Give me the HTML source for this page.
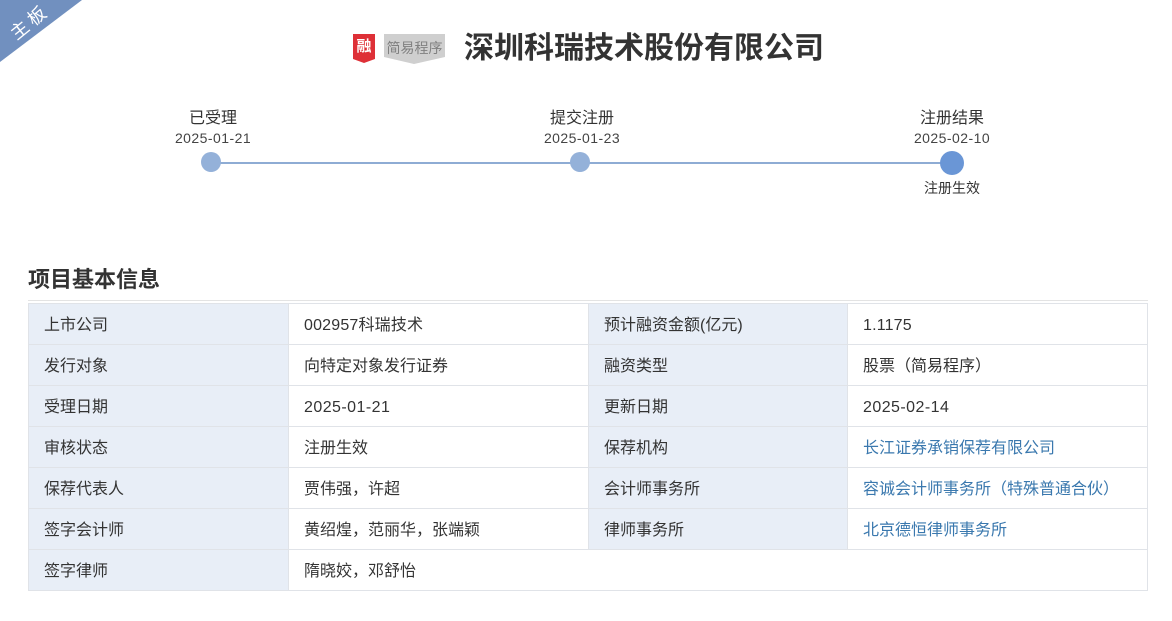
<!DOCTYPE html>
<html lang="zh">
<head>
<meta charset="utf-8">
<style>
html,body{margin:0;padding:0;background:#fff}
body{width:1172px;height:621px;position:relative;overflow:hidden;font-family:"Liberation Sans","Noto Sans CJK SC",sans-serif;color:#333}
.a{position:absolute;white-space:nowrap}
.c{transform:translateX(-50%);text-align:center}
.d{font-size:14px;letter-spacing:.45px;color:#444;line-height:20px}
.s{font-size:16px;line-height:20px;color:#333}
.dot{position:absolute;width:20px;height:20px;border-radius:50%;background:#94b1d9}
.cell{position:absolute;box-sizing:border-box;height:42px;border:1px solid #e0e3e8;font-size:16px;line-height:44px;padding-left:15px;white-space:nowrap;color:#333}
.k{background:#e8eef7}
.l{color:#3a78ae}
.n{letter-spacing:.45px}
.m{letter-spacing:.18px}
</style>
</head>
<body>
<svg class="a" style="left:0;top:0" width="84" height="64"><polygon points="0,0 82,0 0,62" fill="#7190bf"/></svg>
<div class="a" style="left:5px;top:12px;color:#fff;font-size:18px;line-height:20px;width:50px;text-align:center;transform:rotate(-39deg);letter-spacing:4px">主板</div>

<svg class="a" style="left:353px;top:34px" width="22" height="30"><polygon points="0,0 22,0 22,25 11,29 0,25" fill="#de3037"/></svg>
<div class="a" style="left:353px;top:37px;width:22px;text-align:center;color:#fff;font-size:15px;font-weight:700;line-height:20px">融</div>
<svg class="a" style="left:384px;top:34px" width="61" height="30"><polygon points="0,0 61,0 61,23 30,30 0,23" fill="#cfcfcf"/></svg>
<div class="a" style="left:384px;top:38px;width:61px;text-align:center;color:#808080;font-size:14px;line-height:20px;letter-spacing:0">简易程序</div>
<div class="a" style="left:464px;top:28px;font-size:30px;font-weight:700;line-height:42px;color:#333;letter-spacing:0">深圳科瑞技术股份有限公司</div>

<div class="a c s" style="left:213px;top:109px">已受理</div>
<div class="a c d" style="left:213px;top:128px">2025-01-21</div>
<div class="a c s" style="left:582px;top:109px">提交注册</div>
<div class="a c d" style="left:582px;top:128px">2025-01-23</div>
<div class="a c s" style="left:952px;top:109px">注册结果</div>
<div class="a c d" style="left:952px;top:128px">2025-02-10</div>
<div class="a" style="left:211px;top:162px;width:741px;height:2px;background:#8eacd4"></div>
<div class="dot" style="left:201px;top:152px"></div>
<div class="dot" style="left:570px;top:152px"></div>
<div class="dot" style="left:940px;top:151px;width:24px;height:24px;background:#6a96d6"></div>
<div class="a c" style="left:952px;top:178px;font-size:14px;line-height:20px;color:#333">注册生效</div>

<div class="a" style="left:28px;top:265px;font-size:22px;font-weight:700;line-height:30px;color:#333">项目基本信息</div>
<div class="a" style="left:28px;top:300px;width:1120px;height:1px;background:#e3e3e3"></div>

<div class="cell k" style="left:28px;top:303px;width:261px">上市公司</div>
<div class="cell m" style="left:288px;top:303px;width:301px">002957科瑞技术</div>
<div class="cell k" style="left:588px;top:303px;width:260px">预计融资金额(亿元)</div>
<div class="cell m" style="left:847px;top:303px;width:301px">1.1175</div>

<div class="cell k" style="left:28px;top:344px;width:261px">发行对象</div>
<div class="cell" style="left:288px;top:344px;width:301px">向特定对象发行证券</div>
<div class="cell k" style="left:588px;top:344px;width:260px">融资类型</div>
<div class="cell" style="left:847px;top:344px;width:301px">股票（简易程序）</div>

<div class="cell k" style="left:28px;top:385px;width:261px">受理日期</div>
<div class="cell n" style="left:288px;top:385px;width:301px">2025-01-21</div>
<div class="cell k" style="left:588px;top:385px;width:260px">更新日期</div>
<div class="cell n" style="left:847px;top:385px;width:301px">2025-02-14</div>

<div class="cell k" style="left:28px;top:426px;width:261px">审核状态</div>
<div class="cell" style="left:288px;top:426px;width:301px">注册生效</div>
<div class="cell k" style="left:588px;top:426px;width:260px">保荐机构</div>
<div class="cell l" style="left:847px;top:426px;width:301px">长江证券承销保荐有限公司</div>

<div class="cell k" style="left:28px;top:467px;width:261px">保荐代表人</div>
<div class="cell" style="left:288px;top:467px;width:301px">贾伟强，许超</div>
<div class="cell k" style="left:588px;top:467px;width:260px">会计师事务所</div>
<div class="cell l" style="left:847px;top:467px;width:301px">容诚会计师事务所（特殊普通合伙）</div>

<div class="cell k" style="left:28px;top:508px;width:261px">签字会计师</div>
<div class="cell" style="left:288px;top:508px;width:301px">黄绍煌，范丽华，张端颖</div>
<div class="cell k" style="left:588px;top:508px;width:260px">律师事务所</div>
<div class="cell l" style="left:847px;top:508px;width:301px">北京德恒律师事务所</div>

<div class="cell k" style="left:28px;top:549px;width:261px">签字律师</div>
<div class="cell" style="left:288px;top:549px;width:860px">隋晓姣，邓舒怡</div>
</body>
</html>
